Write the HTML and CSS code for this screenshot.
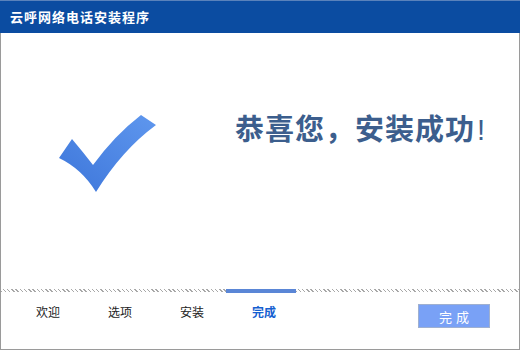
FILE: index.html
```html
<!DOCTYPE html>
<html>
<head>
<meta charset="utf-8">
<link rel="stylesheet" href="styles.css">
</head>
<body>
<div class="window">
  <div class="titlebar">云呼网络电话安装程序</div>
  <div class="content">
    <svg class="check" width="100" height="80" viewBox="0 0 100 80">
      <defs>
        <linearGradient id="g" x1="1" y1="0" x2="0" y2="1">
          <stop offset="0" stop-color="#5f97ee"/>
          <stop offset="1" stop-color="#3d76da"/>
        </linearGradient>
      </defs>
      <path d="M1,44 L14,25 Q25,38 35,51 Q57,21 83,1 L98,11 Q64,36 38,78 Q24,55 1,44 Z" fill="url(#g)"/>
    </svg>
    <h1 class="msg">恭喜您，安装成功<span class="bang">!</span></h1>
  </div>
  <div class="progress">
    <div class="hatch first"></div>
    <div class="bar"></div>
    <div class="hatch rest"></div>
  </div>
  <div class="footer">
    <div class="steps">
      <span class="step">欢迎</span>
      <span class="step">选项</span>
      <span class="step">安装</span>
      <span class="step active">完成</span>
    </div>
    <button class="finish">完成</button>
  </div>
</div>
</body>
</html>
```

FILE: styles.css
```css
html, body {
  margin: 0;
  padding: 0;
  background: #fff;
}
body {
  font-family: "Noto Sans CJK SC", "Liberation Sans", sans-serif;
}
.window {
  width: 520px;
  height: 350px;
  box-sizing: border-box;
  border-left: 1px solid #9a9a9a;
  border-right: 1px solid #9a9a9a;
  border-bottom: 1px solid #9a9a9a;
  display: flex;
  flex-direction: column;
}
.titlebar {
  height: 33px;
  margin: 0 -1px;
  box-sizing: border-box;
  border-top: 1px solid #5a82bb;
  background: #0b4ca1;
  color: #fff;
  font-size: 13px;
  font-weight: bold;
  line-height: 31px;
  padding-left: 10px;
  letter-spacing: 1px;
}
.content {
  height: 256px;
  display: flex;
  align-items: flex-start;
}
.check {
  display: block;
  margin-top: 81px;
  margin-left: 57px;
}
.msg {
  margin: 74px 0 0 77px;
  font-size: 29px;
  font-weight: bold;
  color: #3c5e8d;
  letter-spacing: 1px;
  line-height: 40px;
  white-space: nowrap;
}
.bang {
  font-family: "Liberation Sans", sans-serif;
  font-weight: normal;
  padding-left: 2px;
}
.progress {
  display: flex;
  align-items: flex-start;
  height: 4px;
}
.hatch {
  height: 3px;
  background: repeating-linear-gradient(45deg, #a8a8a8 0 1px, #fff 1px 3px);
}
.hatch.first { width: 225px; }
.hatch.rest { flex: 1; }
.bar {
  width: 70px;
  height: 4px;
  background: #5a86d6;
}
.footer {
  flex: 1;
  display: flex;
  align-items: flex-start;
  justify-content: space-between;
}
.steps {
  display: flex;
  padding-left: 11px;
  margin-top: 10px;
}
.step {
  width: 72px;
  text-align: center;
  font-size: 12px;
  line-height: 18px;
  color: #222;
}
.step.active {
  color: #1560d0;
  font-weight: bold;
}
.finish {
  margin: 11px 29px 0 0;
  width: 72px;
  height: 24px;
  box-sizing: border-box;
  border: 1px solid #9fb0d0;
  background: #79a1f6;
  color: #fff;
  font-family: "Noto Sans CJK SC", sans-serif;
  font-size: 13px;
  letter-spacing: 4px;
  padding: 0 0 0 4px;
}
```
